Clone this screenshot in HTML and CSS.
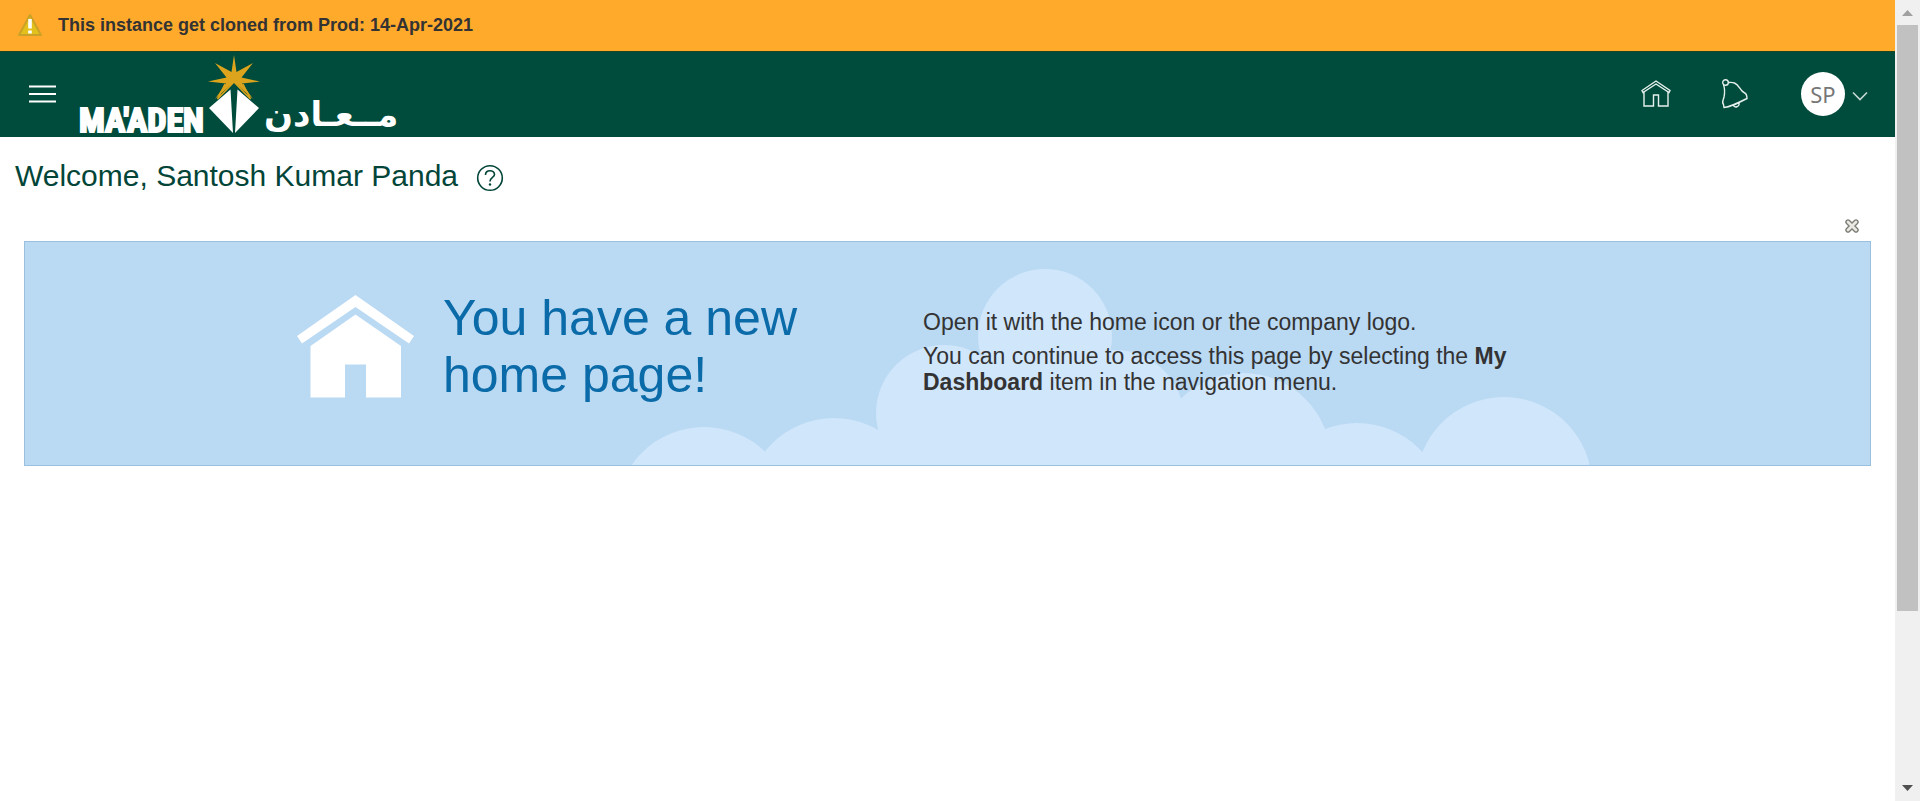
FILE: index.html
```html
<!DOCTYPE html>
<html lang="en">
<head>
<meta charset="utf-8">
<title>My Dashboard</title>
<link rel="stylesheet" href="styles.css">
</head>
<body>
<div class="page">
  <div class="notice" role="status">
    <svg class="notice-icon" viewBox="0 0 24 24" aria-hidden="true">
      <path d="M12 2 L23 22 H1 Z" fill="#e3c01c" stroke="#c9a227" stroke-width="2" stroke-linejoin="round"/>
      <path d="M12 6V15.500M12 17.500V20.500" stroke="#fff" stroke-width="3.600"/>
    </svg>
    <strong>This instance get cloned from Prod: 14-Apr-2021</strong>
  </div>
  <header class="header">
    <button class="icon-button menu-button" type="button" aria-label="Navigator">
      <svg width="27" height="18" viewBox="0 0 27 18" aria-hidden="true"><path d="M0 1.500H27M0 9H27M0 16.500H27" stroke="#fff" stroke-width="2.200"/></svg>
    </button>
    <a class="logo" href="#">
      <span class="logo-latin">MA'ADEN</span>
      <svg class="logo-mark" width="54" height="80" viewBox="210 54 54 80" aria-hidden="true">
        <path d="M237 55 L239.500 72 L256 63 L244.500 77.500 L263 81.500 L245 83.500 L256 99 L237 82 L218 99 L229 83.500 L211 81.500 L229.500 77.500 L218 63 L234.500 72 Z" fill="#dca41c"/>
        <path d="M237 84 L253 99 H221 Z" fill="#004c3c"/>
        <path d="M228 84 L220.500 99 L237 82 L253.500 99 L246 84" fill="none" stroke="#dca41c" stroke-width="1.500"/>
        <path d="M233.500 89.500 L212 108 L236 133 Z M240.500 89.500 L262 108 L238 133 Z" fill="#fff"/>
      </svg>
      <span class="logo-arabic" lang="ar" dir="rtl">مــعـادن</span>
    </a>
    <nav class="tools" aria-label="Global">
      <button class="icon-button" type="button" aria-label="Home">
        <svg width="30" height="28" viewBox="0 0 30 28" fill="none" stroke="#e6f0ed" stroke-width="1.400" aria-hidden="true">
          <path d="M1 10.500 L15 1 L29 10.500 L28 12.500 L15 4 L2 12.500 Z M3 12V26H12.500V15H17.500V26H27V12"/>
        </svg>
      </button>
      <button class="icon-button bell" type="button" aria-label="Notifications">
        <svg width="28" height="32" viewBox="0 0 28 32" fill="none" stroke="#e6f0ed" stroke-width="1.400" aria-hidden="true">
          <circle cx="4.500" cy="4.500" r="2.800"/>
          <path d="M2.500 6.500 C4 11 4 14 3 19 C2 23 0.500 24.500 2.500 26.500 L3 29.500 C9 29 14 26.500 26 20.500 C26 17 25.500 15.500 23 14.500 C19 13 18.500 7 13.500 5 C11 4 8.500 4.500 7 4.500 M12.500 27 C13 30.500 19 29 18 24.500"/>
        </svg>
      </button>
      <button class="icon-button account" type="button" aria-label="Settings and Actions">
        <span class="avatar">SP</span>
        <svg class="chevron" width="16" height="10" viewBox="0 0 16 10" fill="none" stroke="#c5d8d3" stroke-width="1.600" aria-hidden="true"><path d="M1 1.500L8 8.500L15 1.500"/></svg>
      </button>
    </nav>
  </header>
  <main class="content">
    <div class="title-row">
      <h1>Welcome, Santosh Kumar Panda</h1>
      <button class="icon-button help" type="button" aria-label="Help">
        <svg width="28" height="28" viewBox="0 0 28 28" fill="none" stroke="#034538" aria-hidden="true">
          <circle cx="14" cy="14" r="12.300" stroke-width="1.600"/>
          <path d="M9.500 11C9.500 5.500 18.500 5.500 18.500 10.500C18.500 13.500 14 13.500 14 17.500" stroke-width="1.600"/>
          <circle cx="14" cy="20.500" r="1.200" fill="#034538" stroke="none"/>
        </svg>
      </button>
    </div>
    <div class="close-row">
      <button class="icon-button" type="button" aria-label="Close">
        <svg width="14" height="14" viewBox="0 0 14 14" stroke-linecap="round" aria-hidden="true">
          <path d="M3 3L11 11M11 3L3 11" stroke="#7c7c76" stroke-width="5.400"/>
          <path d="M3 3L11 11M11 3L3 11" stroke="#e9e8e2" stroke-width="2.800"/>
        </svg>
      </button>
    </div>
    <section class="banner">
      <svg class="clouds" width="957" height="196" viewBox="632 271 957 196" fill="#d0e6fb" aria-hidden="true">
        <circle cx="704" cy="517" r="88"/>
        <circle cx="834" cy="508" r="88"/>
        <circle cx="944" cy="415" r="68"/>
        <circle cx="1045" cy="338" r="67"/>
        <circle cx="1115" cy="421" r="69"/>
        <circle cx="1243" cy="463" r="88"/>
        <circle cx="1357" cy="513" r="88"/>
        <circle cx="1504" cy="487" r="88"/>
        <path d="M880 440L944 390H1115L1200 430L1280 467H880Z"/>
      </svg>
      <svg class="house" width="119" height="106" viewBox="0 0 119 106" fill="#fff" aria-hidden="true">
        <path d="M59.500 1L118 42L113 49.500L59.500 13L6 49.500L1 42Z"/>
        <path d="M59.500 20.500L105 52V103.500H70V70.500H49V103.500H14.500V52Z"/>
      </svg>
      <h2>You have a new home page!</h2>
      <div class="banner-text">
        <p>Open it with the home icon or the company logo.</p>
        <p>You can continue to access this page by selecting the <b>My Dashboard</b> item in the navigation menu.</p>
      </div>
    </section>
  </main>
</div>
<div class="scrollbar" aria-hidden="true">
  <svg class="scroll-arrow" viewBox="0 0 25 25"><path d="M7 16L12.500 10L18 16Z" fill="#a0a0a0"/></svg>
  <div class="track"><div class="thumb"></div></div>
  <svg class="scroll-arrow" viewBox="0 0 25 25"><path d="M7 9L12.500 15L18 9Z" fill="#505050"/></svg>
</div>
</body>
</html>
```
FILE: styles.css
```css
* { box-sizing: border-box; }

body {
  margin: 0;
  display: flex;
  min-height: 100vh;
  background: #fff;
  color: #333;
  font-family: "Liberation Sans", Arial, sans-serif;
}

h1, h2, p { margin: 0; font-weight: 400; }
svg { display: block; }

.page { flex: 1; min-width: 0; }

.icon-button {
  display: flex;
  align-items: center;
  padding: 0;
  border: 0;
  background: none;
  cursor: pointer;
}

.notice {
  display: flex;
  align-items: center;
  gap: 16px;
  height: 51px;
  padding: 0 18px 1px;
  background: #ffaa2b;
  font-size: 18px;
}
.notice-icon { width: 24px; height: 24px; }

.header {
  display: flex;
  align-items: center;
  height: 86px;
  padding: 0 27px 2px 29px;
  border-top: 1px solid #1c4420;
  background: #004c3c;
}

.logo {
  display: flex;
  align-self: stretch;
  align-items: flex-end;
  gap: 3px;
  margin-left: 23px;
  padding-bottom: 1px;
  color: #fff;
  text-decoration: none;
  white-space: nowrap;
}
.logo-latin {
  font: 700 34px/28px "Roboto Condensed", "Open Sans Condensed", "DejaVu Sans Condensed", sans-serif;
  -webkit-text-stroke: 2px #fff;
}
.logo-arabic { font: 700 34px/40px "DejaVu Sans", sans-serif; }

.tools {
  display: flex;
  align-items: center;
  gap: 50px;
  margin-left: auto;
}
.account {
  gap: 7px;
  margin-left: 2px;
}
.avatar {
  width: 44px;
  height: 44px;
  border-radius: 50%;
  background: #fff;
  color: #777;
  font: 22px/44px "Noto Sans", sans-serif;
  text-align: center;
}
.chevron { margin-top: 4px; }

.content { padding: 19px 24px 24px 15px; }

.title-row {
  display: flex;
  align-items: center;
  gap: 18px;
  color: #034538;
}
h1 { font-size: 30px; line-height: 40px; }
.help { margin-top: 3px; }

.close-row {
  display: flex;
  justify-content: flex-end;
  padding: 23px 12px 8px;
}

.banner {
  position: relative;
  display: flex;
  align-items: center;
  min-height: 225px;
  margin-left: 9px;
  padding: 0 24px 3px 271px;
  border: 1px solid #9bbfdf;
  background: #bad9f3;
  overflow: hidden;
}
.clouds {
  position: absolute;
  bottom: 0;
  left: 32.9%;
}
.house {
  position: relative;
  flex: none;
  margin-bottom: 11px;
}
h2 {
  position: relative;
  flex: none;
  width: 480px;
  margin: 0 0 11px 28px;
  padding-right: 100px;
  color: #0a6ba8;
  font-size: 50px;
  line-height: 57px;
}
.banner-text {
  position: relative;
  display: grid;
  gap: 8px;
  max-width: 600px;
  font-size: 23px;
  line-height: 26px;
}

.scrollbar {
  display: flex;
  flex-direction: column;
  flex: none;
  width: 25px;
  background: #f0f0f0;
}
.scroll-arrow { width: 25px; height: 25px; }
.track { flex: 1; padding: 0 2px; }
.thumb { height: 78%; background: #c1c1c1; }
```
